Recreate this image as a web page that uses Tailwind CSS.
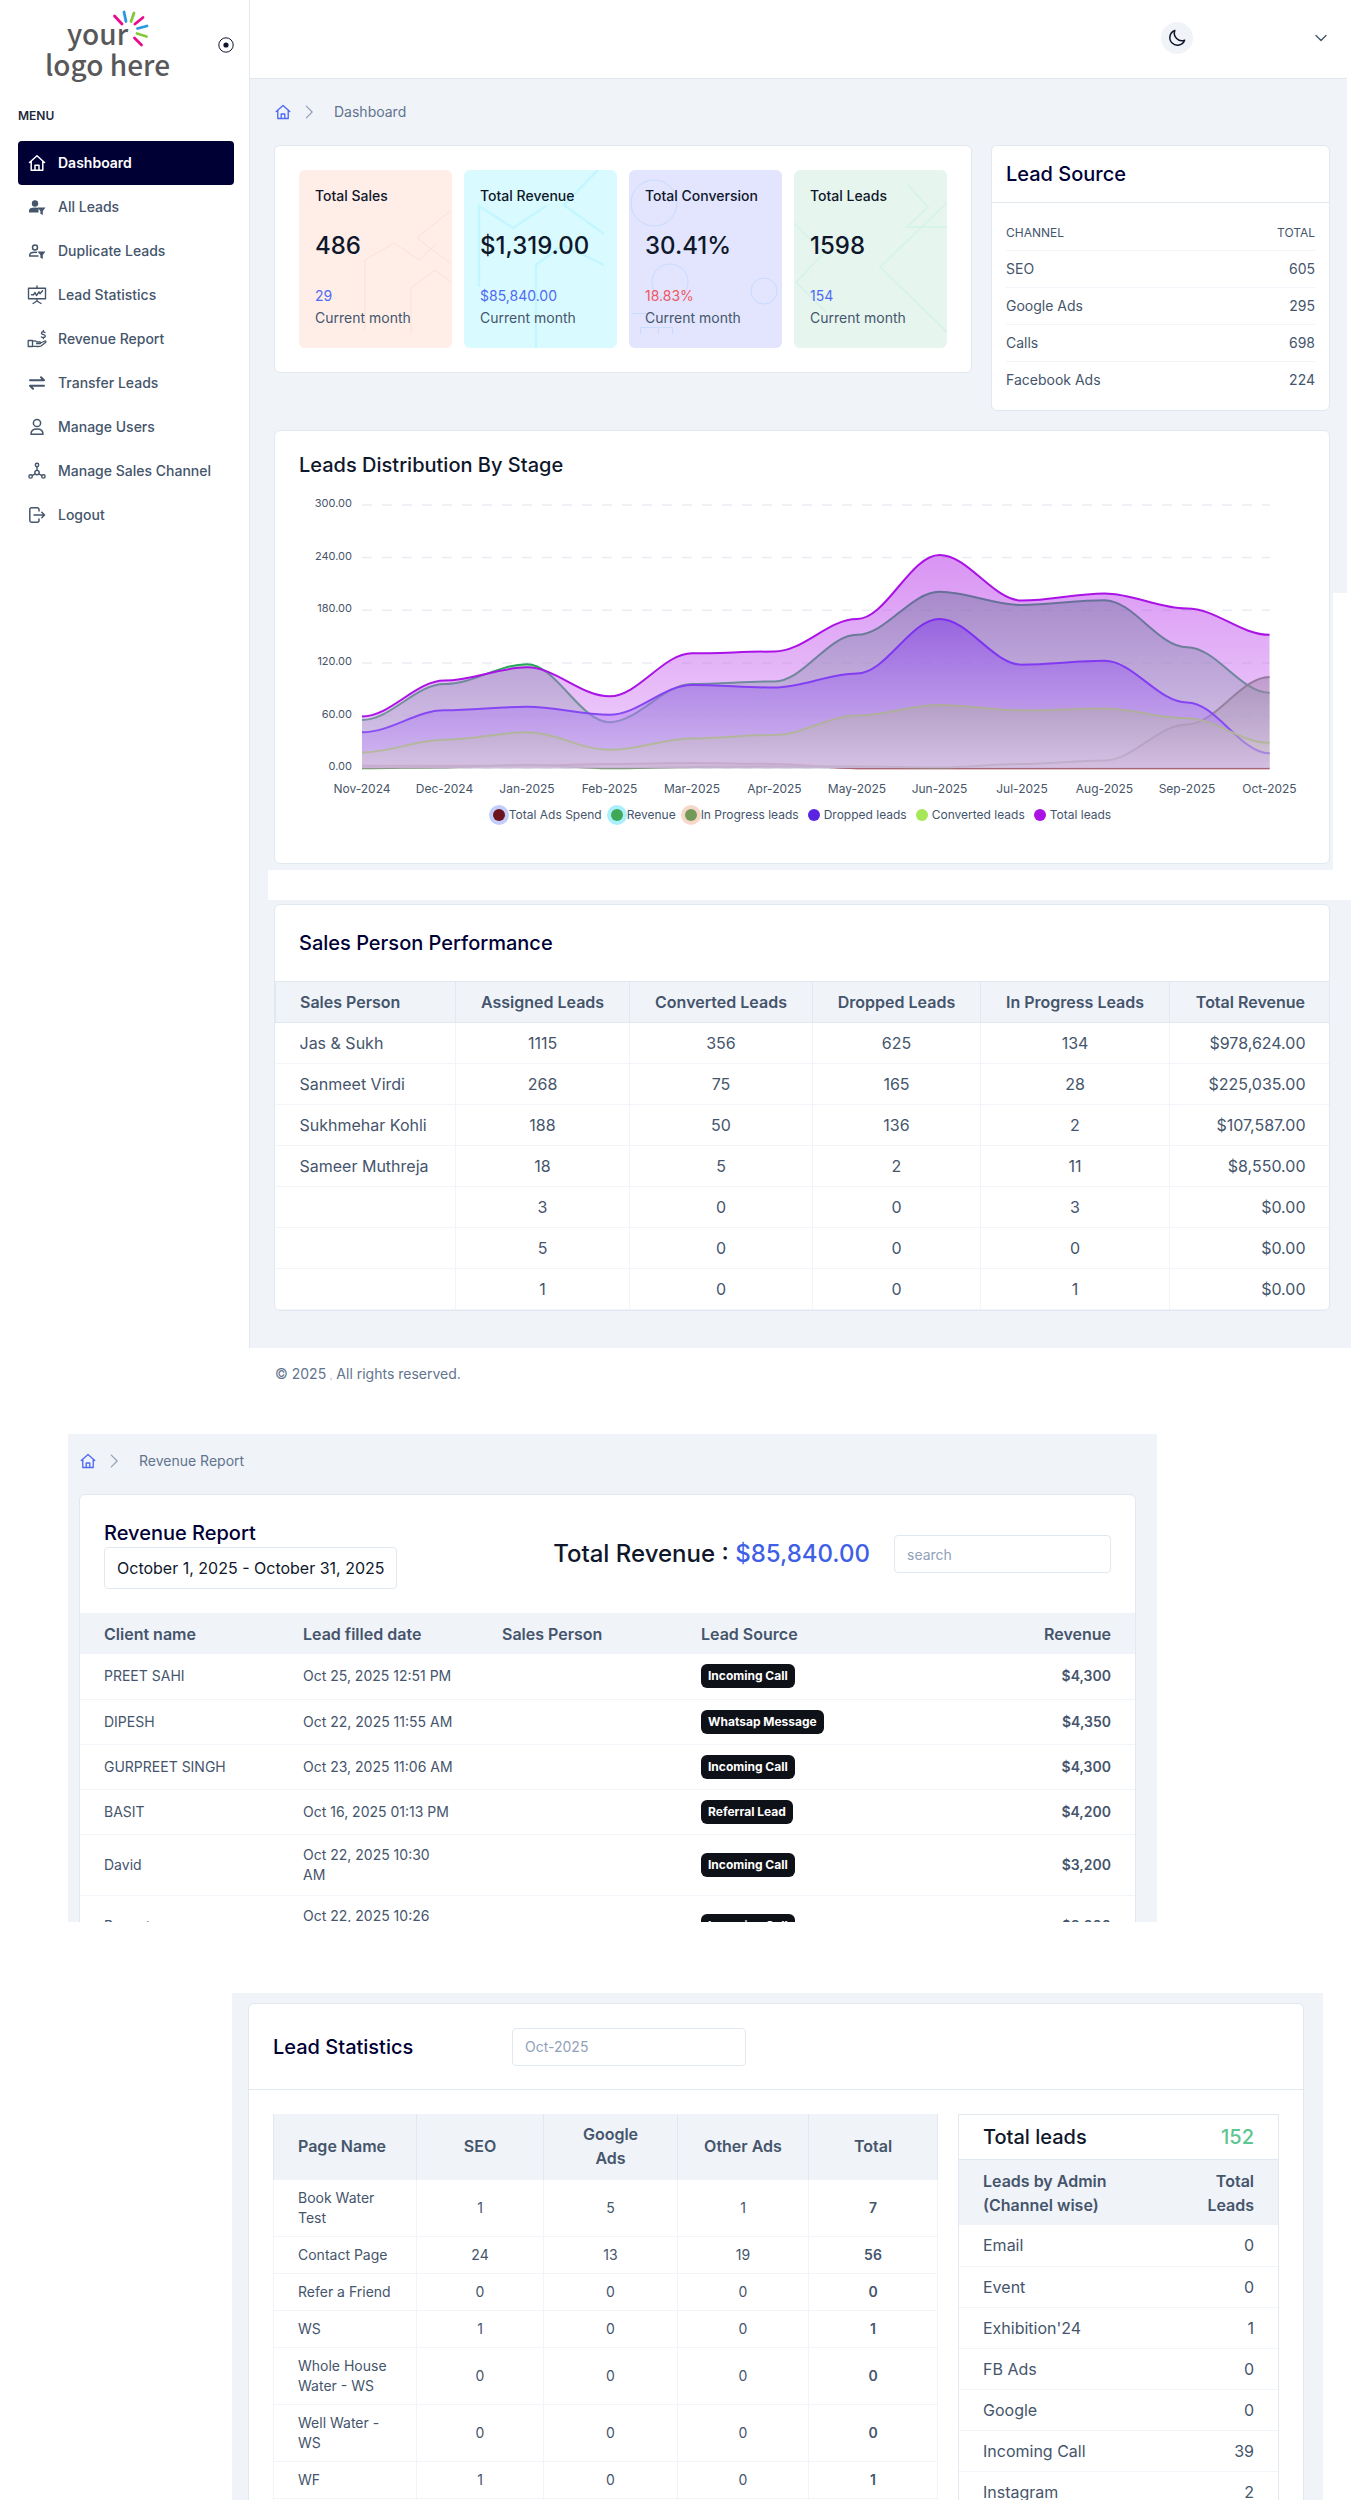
<!DOCTYPE html>
<html lang="en">
<head>
<meta charset="utf-8">
<title>Dashboard</title>
<script src="https://cdn.jsdelivr.net/npm/@tailwindcss/browser@4"></script>
</head>
<body class="bg-white font-['Inter',sans-serif] text-sm text-slate-600">

<svg class="hidden" aria-hidden="true">
  <symbol id="home" viewBox="0 0 20 20" fill="none" stroke="currentColor" stroke-width="1.5" stroke-linejoin="round" stroke-linecap="round">
    <path d="M2.5 9.5 10 2.8l7.500 6.700M4.200 8.200v9h11.600v-9M8 17v-4.800h4V17"/>
  </symbol>
  <symbol id="chev" viewBox="0 0 20 20" fill="none" stroke="currentColor" stroke-width="1.300" stroke-linecap="round" stroke-linejoin="round">
    <path d="m7 3.500 6.500 6.500L7 16.500"/>
  </symbol>
</svg>

<div class="flex">
  <aside class="w-[250px] shrink-0 border-r border-slate-200">
    <div class="flex h-[90px] items-center justify-between pr-[15px]">
      <a href="#" aria-label="your logo here">
        <svg class="h-[90px] w-[190px]" viewBox="0 0 190 90">
          <g fill="#58585a" font-family="'Noto Sans CJK SC', sans-serif" font-size="28" font-weight="500">
            <text x="67" y="45">your</text>
            <text x="45" y="76">logo here</text>
          </g>
          <g stroke-width="2.800" stroke-linecap="round" fill="none">
            <path stroke="#ec0a8c" d="M114.500 16l7.500 8M143 17.500l-8 6.500M141.500 45l-7-7"/>
            <path stroke="#2a97e0" d="M124 12l2 9.500M147 26l-9.500 2.500"/>
            <path stroke="#86c83c" d="M134 13l-3 8.500M146.500 36.500l-9.500-3"/>
          </g>
        </svg>
      </a>
      <button type="button" aria-label="Toggle menu" class="text-slate-900">
        <svg class="size-4" viewBox="0 0 16 16" fill="none" stroke="currentColor"><circle cx="8" cy="8" r="7.200"/><circle cx="8" cy="8" r="2.600" fill="currentColor" stroke="none"/></svg>
      </button>
    </div>
    <p class="mt-4 pl-[18px] text-xs leading-5 font-semibold text-slate-800">MENU</p>
    <nav class="mt-[15px] pr-[15px] pl-[18px] font-medium [&_a]:flex [&_a]:h-11 [&_a]:items-center [&_a]:gap-[11px] [&_a]:rounded [&_a]:pl-[9px] [&_svg]:size-5">
      <a href="#" class="bg-[#000035] font-semibold text-white"><svg><use href="#home"/></svg>Dashboard</a>
      <a href="#"><svg viewBox="0 0 20 20" fill="currentColor"><circle cx="8" cy="6.500" r="3.200"/><path d="M2 15.500v-2c0-2 2-3 6-3 1.500 0 2.500.2 3.500.6v4.400zM10.500 10.500h8l-2.700 3.500v4l-2.400-1.200V14z"/></svg>All Leads</a>
      <a href="#"><svg viewBox="0 0 20 20" fill="none" stroke="currentColor" stroke-width="1.500"><circle cx="8" cy="6.500" r="2.500"/><path d="M11.500 15H2.800v-1.200c0-1.600 2-2.600 5.200-2.600.8 0 1.500.1 2 .2"/><path fill="currentColor" stroke="none" d="M10.500 10.500h8l-2.700 3.500v4l-2.400-1.200V14z"/></svg>Duplicate Leads</a>
      <a href="#"><svg viewBox="0 0 20 20" fill="none" stroke="currentColor" stroke-width="1.400" stroke-linejoin="round" stroke-linecap="round"><path d="M1.500 3.200h17v10.600h-17zM10 1v2M10 14v2M6 18.500l4-2.500 4 2.500M4.500 9.800h2L8 7.500l1.500 3L12 6.800l1 2 2.600-3"/></svg>Lead Statistics</a>
      <a href="#"><svg viewBox="0 0 20 20" fill="none" stroke="currentColor" stroke-width="1.300" stroke-linejoin="round" stroke-linecap="round"><path d="M1.200 11.500h4.300v6H1.200zM5.500 12.500c2-1.200 3.500-.5 4.500.5h3c1 0 1 1.700 0 1.700H9.500M13.500 14l4.500-2c1-.2 1.200 1 .5 1.500L14 17c-2 1-5 .5-8.500 0M18 3.500c-1.500-1.200-4-.5-3.500 1s3.800.8 3.800 2.500-2.600 2-4 1M16.400 1.500v1.400M16.400 8.500v1.200"/></svg>Revenue Report</a>
      <a href="#"><svg viewBox="0 0 20 20" fill="none" stroke="currentColor" stroke-width="2" stroke-linecap="round" stroke-linejoin="round"><path d="M3 7.300h14l-3-3M17 12.700H3l3 3"/></svg>Transfer Leads</a>
      <a href="#"><svg viewBox="0 0 20 20" fill="none" stroke="currentColor" stroke-width="1.500" stroke-linejoin="round"><circle cx="10" cy="6" r="3.600"/><path d="M4 17.200c0-3.400 2-5.200 6-5.200s6 1.800 6 5.200z"/></svg>Manage Users</a>
      <a href="#"><svg viewBox="0 0 20 20" fill="none" stroke="currentColor" stroke-width="1.400"><circle cx="10" cy="4" r="1.700"/><circle cx="3.600" cy="15.400" r="1.700"/><circle cx="16.400" cy="15.400" r="1.700"/><circle cx="10" cy="11.600" r="2.200"/><path d="M10 5.700v3.700M8.200 12.800l-3.200 1.800M11.800 12.800l3.200 1.800"/></svg>Manage Sales Channel</a>
      <a href="#"><svg viewBox="0 0 20 20" fill="none" stroke="currentColor" stroke-width="1.500" stroke-linecap="round" stroke-linejoin="round"><path d="M12 6V4.500c0-1-.8-1.700-1.800-1.700H4.500c-1 0-1.700.8-1.700 1.700v11c0 1 .8 1.700 1.700 1.700h5.700c1 0 1.800-.8 1.800-1.700V14M7 10h10.500M14.800 7.300l2.700 2.700-2.700 2.700"/></svg>Logout</a>
    </nav>
  </aside>

  <main class="min-w-0 flex-1">
    <div class="relative mr-1 bg-[#f0f3f8]">
      <header class="flex h-[79px] items-center justify-end gap-[120px] border-b border-slate-200 bg-white pr-[18px] pb-0.5">
        <button type="button" aria-label="Dark mode" class="flex size-8 items-center justify-center rounded-full bg-[#f0f3f8] text-slate-900">
          <svg class="size-5" viewBox="0 0 20 20" fill="none" stroke="currentColor" stroke-width="1.500" stroke-linejoin="round"><path d="M7.800 2.500A7.600 7.600 0 1 0 17.600 12.200 7.600 7.600 0 0 1 7.800 2.500z"/></svg>
        </button>
        <button type="button" aria-label="Account" class="text-slate-600">
          <svg class="size-4" viewBox="0 0 16 16" fill="none" stroke="currentColor" stroke-width="1.400" stroke-linecap="round" stroke-linejoin="round"><path d="m3 5.500 5 5 5-5"/></svg>
        </button>
      </header>

      <div class="pr-[17px] pb-[6px] pl-6">
        <nav aria-label="Breadcrumb" class="flex items-center py-[23px] leading-5 text-slate-500">
          <a href="#" aria-label="Home" class="text-[#4f6af5]"><svg class="size-[18px]"><use href="#home"/></svg></a>
          <svg class="ml-2 size-[18px] text-slate-400"><use href="#chev"/></svg>
          <span class="ml-4">Dashboard</span>
        </nav>

        <div class="grid grid-cols-[698fr_339fr] items-start gap-[19px]">
          <section class="grid grid-cols-4 gap-3 rounded-md border border-slate-200 bg-white p-6 [&>div]:relative [&>div]:h-[178px] [&>div]:overflow-hidden [&>div]:rounded-md [&>div]:px-4 [&>div]:pt-4 [&>div]:leading-5 [&_p]:relative [&_svg]:absolute [&_svg]:inset-0 [&_svg]:h-full [&_svg]:w-full">
            <div class="bg-[#ffeee8]">
              <svg viewBox="0 0 153 178" fill="none" stroke="#fae1d2"><path d="M151 41 118 68l33 25M66 160V90l29-17 25 17 18-17M112 164v-46l24-18 15 11"/></svg>
              <p class="font-medium text-slate-900">Total Sales</p>
              <p class="mt-6 text-2xl leading-8 font-medium text-slate-900">486</p>
              <p class="mt-6 text-[#4f6af5]">29</p>
              <p class="mt-0.5">Current month</p>
            </div>
            <div class="bg-[#d9fbff]">
              <svg viewBox="0 0 153 178" fill="none" stroke="#c4f6ff" stroke-width="2.500"><path d="M15 117V36l34 22 33-22M134 0l-34 35 40 29M72 178V95l27-20 41 20"/></svg>
              <p class="font-medium text-slate-900">Total Revenue</p>
              <p class="mt-6 text-2xl leading-8 font-medium text-slate-900">$1,319.00</p>
              <p class="mt-6 text-[#4f6af5]">$85,840.00</p>
              <p class="mt-0.5">Current month</p>
            </div>
            <div class="bg-[#e2e5fd]">
              <svg viewBox="0 0 153 178" fill="none" stroke="#c8dafd"><circle cx="25" cy="33" r="23"/><circle cx="41" cy="112" r="18"/><circle cx="135" cy="121" r="13"/><path d="M3 143.500h16M11.500 164v-6.500h32v6.500M29.500 157v7"/></svg>
              <p class="font-medium whitespace-nowrap text-slate-900">Total Conversion</p>
              <p class="mt-6 text-2xl leading-8 font-medium text-slate-900">30.41%</p>
              <p class="mt-6 text-[#f2565f]">18.83%</p>
              <p class="mt-0.5">Current month</p>
            </div>
            <div class="bg-[#e6f5ee]">
              <svg viewBox="0 0 153 178" fill="none" stroke="#d8f3ea" stroke-width="2"><path d="m0 53 30 30L2 112l30 30M114 15l20 22-21 20h41M154 32 86 97l68 66"/></svg>
              <p class="font-medium text-slate-900">Total Leads</p>
              <p class="mt-6 text-2xl leading-8 font-medium text-slate-900">1598</p>
              <p class="mt-6 text-[#4f6af5]">154</p>
              <p class="mt-0.5">Current month</p>
            </div>
          </section>

          <section class="rounded-md border border-slate-200 bg-white">
            <h2 class="flex h-[57px] items-center border-b border-slate-200 px-[14px] text-xl font-medium text-[#000035]">Lead Source</h2>
            <div class="px-[14px] pt-[14px] pb-3">
              <table class="w-full leading-5 [&_td]:h-[37px] [&_td:last-child]:text-right [&_tr]:border-b [&_tr]:border-slate-100">
                <thead><tr class="h-[33px] text-xs"><th class="text-left font-normal">CHANNEL</th><th class="text-right font-normal">TOTAL</th></tr></thead>
                <tbody class="[&_tr:last-child]:border-0">
                  <tr><td>SEO</td><td>605</td></tr>
                  <tr><td>Google Ads</td><td>295</td></tr>
                  <tr><td>Calls</td><td>698</td></tr>
                  <tr><td>Facebook Ads</td><td>224</td></tr>
                </tbody>
              </table>
            </div>
          </section>
        </div>

        <div class="pointer-events-none absolute right-0 bottom-0 h-[277px] w-[14px] bg-white"></div>

        <section class="relative mt-[19px] rounded-md border border-slate-200 bg-white pt-5 pb-[38px]">
          <h2 class="px-6 text-xl leading-7 font-medium text-slate-900">Leads Distribution By Stage</h2>
          <svg id="chart" class="mt-[6px] w-full" viewBox="0 0 1054 320" role="img" aria-label="Leads distribution by stage"></svg>
          <ul class="flex items-center justify-center gap-[9px] text-xs leading-5 [&_i]:size-3 [&_i]:rounded-full [&_li]:flex [&_li]:items-center [&_li]:gap-1">
            <li><i class="bg-[#6b1420] ring-4 ring-[#c3cdfb]"></i>Total Ads Spend</li>
            <li><i class="bg-[#3fa858] ring-4 ring-[#a9effc]"></i>Revenue</li>
            <li><i class="bg-[#739a58] ring-4 ring-[#f6d8ca]"></i>In Progress leads</li>
            <li><i class="bg-[#5b24e0]"></i>Dropped leads</li>
            <li><i class="bg-[#a6e657]"></i>Converted leads</li>
            <li><i class="bg-[#aa12e6]"></i>Total leads</li>
          </ul>
        </section>
      </div>
    </div>

    <div class="bg-[#f0f3f8] pl-[18px]"><div class="h-[30px] bg-white"></div></div>

    <div class="bg-[#f0f3f8] pt-1 pr-[21px] pb-[37px] pl-6">
      <section class="overflow-hidden rounded-md border border-slate-200 bg-white">
        <h2 class="flex h-[76px] items-center px-6 text-xl font-medium text-[#000035]">Sales Person Performance</h2>
        <table class="w-full table-fixed border-collapse text-center text-base leading-6 whitespace-nowrap [&_td]:h-[41px] [&_td]:border [&_td]:border-slate-100 [&_td:first-child]:border-l-0 [&_td:first-child]:pl-6 [&_td:first-child]:text-left [&_td:last-child]:border-r-0 [&_td:last-child]:pr-6 [&_td:last-child]:text-right [&_th]:h-[41px] [&_th]:border [&_th]:border-slate-200 [&_th]:bg-[#f0f3f8] [&_th]:font-semibold">
          <colgroup><col class="w-[180px]"><col class="w-[174px]"><col class="w-[183px]"><col class="w-[168px]"><col class="w-[189px]"><col class="w-[160px]"></colgroup>
          <thead><tr><th class="pl-6 text-left">Sales Person</th><th>Assigned Leads</th><th>Converted Leads</th><th>Dropped Leads</th><th>In Progress Leads</th><th class="pr-6 text-right">Total Revenue</th></tr></thead>
          <tbody>
            <tr><td>Jas &amp; Sukh</td><td>1115</td><td>356</td><td>625</td><td>134</td><td>$978,624.00</td></tr>
            <tr><td>Sanmeet Virdi</td><td>268</td><td>75</td><td>165</td><td>28</td><td>$225,035.00</td></tr>
            <tr><td>Sukhmehar Kohli</td><td>188</td><td>50</td><td>136</td><td>2</td><td>$107,587.00</td></tr>
            <tr><td>Sameer Muthreja</td><td>18</td><td>5</td><td>2</td><td>11</td><td>$8,550.00</td></tr>
            <tr><td></td><td>3</td><td>0</td><td>0</td><td>3</td><td>$0.00</td></tr>
            <tr><td></td><td>5</td><td>0</td><td>0</td><td>0</td><td>$0.00</td></tr>
            <tr><td></td><td>1</td><td>0</td><td>0</td><td>1</td><td>$0.00</td></tr>
          </tbody>
        </table>
      </section>
    </div>
  </main>
</div>

<footer class="h-[86px] pt-4 pl-[275px] leading-5 text-slate-500">© 2025 <span class="text-[8px] text-slate-400">,</span> All rights reserved.</footer>

<div class="mr-[194px] ml-[68px] h-[488px] overflow-hidden bg-[#f0f3f8] pr-[21px] pl-[11px]">
  <nav aria-label="Breadcrumb" class="flex items-center pt-[17px] pb-[23px] leading-5 text-slate-500">
    <a href="#" aria-label="Home" class="text-[#4f6af5]"><svg class="size-[18px]"><use href="#home"/></svg></a>
    <svg class="ml-2 size-[18px] text-slate-400"><use href="#chev"/></svg>
    <span class="ml-4">Revenue Report</span>
  </nav>
  <section class="rounded-md border border-slate-200 bg-white">
    <div class="flex items-center p-6">
      <div>
        <label for="range" class="block text-xl leading-7 font-medium text-[#000035]">Revenue Report</label>
        <input id="range" type="text" value="October 1, 2025 - October 31, 2025" class="block h-[42px] w-[293px] rounded border border-slate-200 px-3 text-base text-slate-900">
      </div>
      <p class="ml-auto text-2xl font-medium text-slate-900">Total Revenue : <span class="text-[#3f5fe6]">$85,840.00</span></p>
      <input type="text" aria-label="Search" placeholder="search" class="ml-6 h-[38px] w-[217px] rounded border border-slate-200 px-3 placeholder:text-slate-400">
    </div>
    <table class="w-full table-fixed border-collapse text-left leading-5 whitespace-nowrap [&_b]:inline-block [&_b]:rounded-md [&_b]:bg-[#0f1118] [&_b]:px-[7px] [&_b]:py-1 [&_b]:align-middle [&_b]:text-xs [&_b]:leading-4 [&_b]:font-bold [&_b]:text-white [&_td]:pl-6 [&_td:last-child]:pr-6 [&_td:last-child]:text-right [&_td:last-child]:font-semibold [&_th]:h-[41px] [&_th]:bg-[#f0f3f8] [&_th]:pl-6 [&_th]:text-base [&_th]:font-semibold [&_tbody_tr]:h-[45px] [&_tbody_tr]:border-b [&_tbody_tr]:border-slate-100">
      <colgroup><col class="w-[199px]"><col class="w-[199px]"><col class="w-[199px]"><col class="w-[199px]"><col></colgroup>
      <thead><tr><th>Client name</th><th>Lead filled date</th><th>Sales Person</th><th>Lead Source</th><th class="pr-6 text-right">Revenue</th></tr></thead>
      <tbody>
        <tr><td>PREET SAHI</td><td>Oct 25, 2025 12:51 PM</td><td></td><td><b>Incoming Call</b></td><td>$4,300</td></tr>
        <tr><td>DIPESH</td><td>Oct 22, 2025 11:55 AM</td><td></td><td><b>Whatsap Message</b></td><td>$4,350</td></tr>
        <tr><td>GURPREET SINGH</td><td>Oct 23, 2025 11:06 AM</td><td></td><td><b>Incoming Call</b></td><td>$4,300</td></tr>
        <tr><td>BASIT</td><td>Oct 16, 2025 01:13 PM</td><td></td><td><b>Referral Lead</b></td><td>$4,200</td></tr>
        <tr><td>David</td><td class="py-[10px]">Oct 22, 2025 10:30<br>AM</td><td></td><td><b>Incoming Call</b></td><td>$3,200</td></tr>
        <tr><td>Puneet</td><td class="py-[10px]">Oct 22, 2025 10:26<br>AM</td><td></td><td><b>Incoming Call</b></td><td>$3,200</td></tr>
      </tbody>
    </table>
  </section>
</div>

<div class="mt-[71px] mr-7 ml-[232px] h-[507px] overflow-hidden bg-[#f0f3f8] pt-[10px] pr-[19px] pl-4">
  <section class="rounded-md border border-slate-200 bg-white">
    <div class="flex h-[86px] items-center border-b border-slate-200 px-6">
      <label for="month" class="w-[239px] text-xl font-medium text-[#000035]">Lead Statistics</label>
      <input id="month" type="text" placeholder="Oct-2025" class="h-[38px] w-[234px] rounded border border-slate-200 px-3 placeholder:text-slate-400">
    </div>
    <div class="grid grid-cols-[664fr_322fr] items-start gap-5 p-6">
      <table class="w-full table-fixed border-collapse text-center leading-5 [&_td]:h-[37px] [&_td]:border [&_td]:border-slate-100 [&_td:first-child]:pr-3 [&_td:first-child]:pl-6 [&_td:first-child]:text-left [&_td:last-child]:font-semibold [&_th]:h-[65px] [&_th]:border-x [&_th]:border-slate-200 [&_th]:bg-[#f0f3f8] [&_th]:text-base [&_th]:font-semibold">
        <colgroup><col class="w-[143px]"><col class="w-[127px]"><col class="w-[134px]"><col class="w-[131px]"><col class="w-[129px]"></colgroup>
        <thead><tr><th class="pl-6 text-left">Page Name</th><th>SEO</th><th>Google<br>Ads</th><th>Other Ads</th><th>Total</th></tr></thead>
        <tbody>
          <tr class="h-[57px]"><td>Book Water<br>Test</td><td>1</td><td>5</td><td>1</td><td>7</td></tr>
          <tr><td>Contact Page</td><td>24</td><td>13</td><td>19</td><td>56</td></tr>
          <tr><td>Refer a Friend</td><td>0</td><td>0</td><td>0</td><td>0</td></tr>
          <tr><td>WS</td><td>1</td><td>0</td><td>0</td><td>1</td></tr>
          <tr class="h-[57px]"><td>Whole House<br>Water - WS</td><td>0</td><td>0</td><td>0</td><td>0</td></tr>
          <tr class="h-[57px]"><td>Well Water -<br>WS</td><td>0</td><td>0</td><td>0</td><td>0</td></tr>
          <tr><td>WF</td><td>1</td><td>0</td><td>0</td><td>1</td></tr>
          <tr><td></td><td></td><td></td><td></td><td></td></tr>
        </tbody>
      </table>
      <div class="border border-slate-200">
        <p class="flex h-[45px] items-center justify-between border-b border-slate-200 px-6 text-xl font-medium text-slate-900">Total leads <span class="text-[#5cc690]">152</span></p>
        <table class="w-full border-collapse text-base leading-6 [&_td]:h-[41px] [&_td:first-child]:pl-6 [&_td:last-child]:pr-6 [&_td:last-child]:text-right [&_tbody_tr]:border-b [&_tbody_tr]:border-slate-100 [&_th]:h-[65px] [&_th]:bg-[#f0f3f8] [&_th]:font-semibold">
          <thead><tr><th class="pl-6 text-left">Leads by Admin<br>(Channel wise)</th><th class="pr-6 text-right">Total<br>Leads</th></tr></thead>
          <tbody>
            <tr><td>Email</td><td>0</td></tr>
            <tr><td>Event</td><td>0</td></tr>
            <tr><td>Exhibition'24</td><td>1</td></tr>
            <tr><td>FB Ads</td><td>0</td></tr>
            <tr><td>Google</td><td>0</td></tr>
            <tr><td>Incoming Call</td><td>39</td></tr>
            <tr><td>Instagram</td><td>2</td></tr>
          </tbody>
        </table>
      </div>
    </div>
  </section>
</div>

<script>
  // Smoothed area chart: one gradient-filled path and one stroke per series.
  const months = ['Nov-2024','Dec-2024','Jan-2025','Feb-2025','Mar-2025','Apr-2025','May-2025','Jun-2025','Jul-2025','Aug-2025','Sep-2025','Oct-2025'];
  const series = [
    { c: [139,26,40],  v: [3,3,3,5,6,5,0,0,0,0,0,0] },
    { c: [40,165,88],  v: [55,96,118.5,52.5,96,99,152,201,186,191.5,138,86] },
    { c: [105,140,90], v: [0,1,4,0,1.5,2,2,1,5,9,50,104] },
    { c: [75,30,245],  v: [41,66,70,61,95,92,108,170,118,122.5,75,17] },
    { c: [150,215,87], v: [18,32.5,41,21,34,38,60,72,66,68,57,29] },
    { c: [170,18,230], v: [59,100,115,82,131,133,170,243,191,199,182,152] }
  ];
  const x = i => 87 + 82.5 * i, y = v => 283.3 - v * 0.878;
  let out = '';
  for (let g = 0; g <= 5; g++) {
    const v = 300 - 60 * g, py = y(v);
    out += `<path d="M87 ${py}H995" stroke="#e9eef4" stroke-width="1.500" stroke-dasharray="10 10"/>`;
    out += `<text x="77" y="${py + 2}" text-anchor="end" font-size="11" fill="#475569">${v.toFixed(2)}</text>`;
  }
  series.forEach((s, n) => {
    let d = `M${x(0)} ${y(s.v[0])}`;
    for (let i = 1; i < s.v.length; i++) d += `C${x(i - 1) + 29} ${y(s.v[i - 1])} ${x(i) - 29} ${y(s.v[i])} ${x(i)} ${y(s.v[i])}`;
    const light = s.c.map(k => Math.round(k + (255 - k) * 0.6));
    out += `<linearGradient id="g${n}" x1="0" y1="0" x2="0" y2="1"><stop offset="0" stop-color="rgb(${s.c})" stop-opacity=".45"/><stop offset="1" stop-color="rgb(${light})" stop-opacity=".45"/></linearGradient>`;
    out += `<path d="${d}V283.3H87Z" fill="url(#g${n})"/><path d="${d}" fill="none" stroke="rgb(${s.c})" stroke-width="2"/>`;
  });
  months.forEach((m, i) => out += `<text x="${x(i)}" y="308" text-anchor="middle" font-size="12" fill="#475569">${m}</text>`);
  document.getElementById('chart').innerHTML = out;
</script>
</body>
</html>
